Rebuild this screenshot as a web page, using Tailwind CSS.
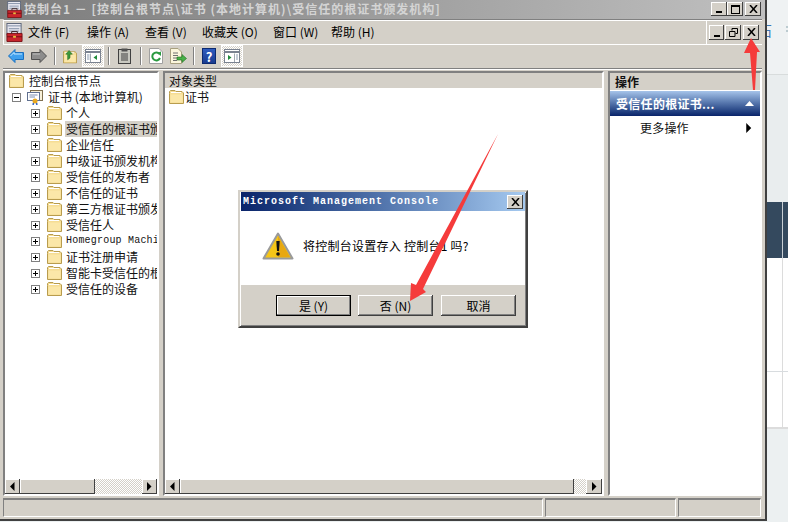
<!DOCTYPE html>
<html lang="zh">
<head>
    <meta charset="UTF-8">
    <title>控制台1</title>
    <script src="https://cdn.jsdelivr.net/npm/@tailwindcss/browser@4"></script>
</head>
<body class="relative w-[788px] h-[522px] overflow-hidden bg-[#ecf0f1] font-['Noto_Sans_CJK_SC','Liberation_Sans',sans-serif] text-[12px] leading-[16px] text-black">

    <!-- shared icons -->
    <svg class="hidden">
        <symbol id="folder" viewBox="0 0 15 14">
            <path d="M.5 3.500V1.500L1.500 .5H6L7 1.500H13L14.500 3V13.500H.5Z" fill="#f6dd94" stroke="#b89c4e"/>
            <path d="M2 2.500H12" stroke="#fff"/>
            <path d="M1.500 4.500H13.500V12.500H1.500Z" fill="#fbe7a8"/>
        </symbol>
        <symbol id="plus" viewBox="0 0 9 9">
            <rect x=".5" y=".5" width="8" height="8" fill="#fff" stroke="#808080"/>
            <path d="M2 4.500H7M4.500 2V7" stroke="#000"/>
        </symbol>
        <symbol id="left" viewBox="0 0 5 9"><path d="M4.500 0V9L0 4.500Z" fill="#000"/></symbol>
        <symbol id="right" viewBox="0 0 5 9"><path d="M0 0V9L4.500 4.500Z" fill="#000"/></symbol>
        <symbol id="appicon" viewBox="0 0 18 20">
            <rect x="1" y=".5" width="15" height="12" fill="#e8e8f0" stroke="#5a6478"/>
            <path d="M1.500 3H16M3 6H14M3 8.500H14" stroke="#7a88a0"/>
            <path d="M1 11H17V19.500H1Z" fill="#c8242c" stroke="#7a1015"/>
            <path d="M6 11V9H12V11" fill="none" stroke="#3a2020"/>
            <path d="M1 14.500H17" stroke="#701015"/>
            <rect x="7.500" y="13.500" width="3" height="2" fill="#e8c040"/>
        </symbol>
    </svg>

    <!-- main window -->
    <div class="relative z-10 w-[767px] h-[521px] bg-[#d4d0c8] border-r-2 border-b-2 border-r-[#404040] border-b-[#404040] flex flex-col">

        <!-- title bar -->
        <div class="h-[19px] shrink-0 flex items-center pr-[4px] pb-[1px] bg-gradient-to-r from-[#7c7c7c] to-[#c0c0c0] text-[#d4d4d4] font-bold">
            <svg class="w-[17px] h-[17px] ml-[6px] shrink-0"><use href="#appicon"/></svg>
            <span class="ml-px whitespace-nowrap overflow-hidden w-[425px] tracking-[1px]">控制台1 － [控制台根节点\证书 (本地计算机)\受信任的根证书颁发机构]</span>
            <div class="ml-auto flex">
                <div class="w-[16px] h-[14px] bg-[#d4d0c8] shadow-[inset_-1px_-1px_0_#404040,inset_1px_1px_0_#fff] flex items-end justify-center pb-[3px]"><div class="w-[6px] h-[2px] bg-black"></div></div>
                <div class="w-[16px] h-[14px] bg-[#d4d0c8] shadow-[inset_-1px_-1px_0_#404040,inset_1px_1px_0_#fff] flex items-center justify-center"><div class="w-[9px] h-[9px] border border-black border-t-2"></div></div>
                <div class="w-[16px] h-[14px] ml-[2px] bg-[#d4d0c8] shadow-[inset_-1px_-1px_0_#404040,inset_1px_1px_0_#fff] flex items-center justify-center">
                    <svg class="w-[9px] h-[8px]" viewBox="0 0 9 8"><path d="M1 0L8 8M8 0L1 8" stroke="#000" stroke-width="1.500"/></svg>
                </div>
            </div>
        </div>

        <!-- menu bar -->
        <div class="h-[25px] shrink-0 mx-[3px] flex items-center border-t border-t-[#808080] border-l border-l-white shadow-[inset_0_1px_0_#fff,0_1px_0_#fff]">
            <svg class="w-[17px] h-[19px] ml-[2px] shrink-0"><use href="#appicon"/></svg>
            <div class="flex ml-[5px] whitespace-nowrap">
                <span class="w-[59px]">文件 (F)</span><span class="w-[58px]">操作 (A)</span><span class="w-[57px]">查看 (V)</span><span class="w-[71px]">收藏夹 (O)</span><span class="w-[58px]">窗口 (W)</span><span>帮助 (H)</span>
            </div>
            <div class="ml-auto h-full w-[56px] border-l border-l-white flex items-center pl-[2px]">
                <div class="w-[15px] h-[15px] bg-[#d4d0c8] shadow-[inset_-1px_-1px_0_#404040,inset_1px_1px_0_#fff] flex items-end justify-center pb-[3px]"><div class="w-[6px] h-[2px] bg-black"></div></div>
                <div class="w-[16px] h-[15px] ml-[1px] bg-[#d4d0c8] shadow-[inset_-1px_-1px_0_#404040,inset_1px_1px_0_#fff] flex items-center justify-center">
                    <svg class="w-[9px] h-[9px]" viewBox="0 0 9 9"><path d="M3 2.500V.5H8.500V5.500H6.500M.5 3.500H6V8.500H.5Z" fill="none" stroke="#000"/></svg>
                </div>
                <div class="w-[16px] h-[15px] ml-[2px] bg-[#d4d0c8] shadow-[inset_-1px_-1px_0_#404040,inset_1px_1px_0_#fff] flex items-center justify-center">
                    <svg class="w-[9px] h-[8px]" viewBox="0 0 9 8"><path d="M1 0L8 8M8 0L1 8" stroke="#000" stroke-width="1.500"/></svg>
                </div>
            </div>
        </div>

        <!-- toolbar -->
        <div class="h-[25px] shrink-0 mx-[3px] flex items-center pl-[5px] border-b border-b-[#808080] shadow-[0_1px_0_#fff]">
            <svg class="w-[16px] h-[14px]" viewBox="0 0 16 14"><path d="M.5 7L7 .5V3.500H15.500V10.500H7V13.500Z" fill="#3fa0ee" stroke="#1a70c0" stroke-linejoin="round"/><path d="M2.500 7L6 3.500V5H14" fill="none" stroke="#c4e8ff"/></svg>
            <svg class="w-[16px] h-[14px] ml-[7px]" viewBox="0 0 16 14"><path d="M15.500 7L9 .5V3.500H.5V10.500H9V13.500Z" fill="#8c8c8c" stroke="#505050" stroke-linejoin="round"/><path d="M2 5H9" stroke="#bdbdbd"/></svg>
            <div class="w-px h-[18px] bg-[#808080] ml-[7px] shadow-[1px_0_0_#fff]"></div>
            <svg class="w-[14px] h-[15px] ml-[8px]" viewBox="0 0 15 15"><use href="#folder" width="15" height="14" y="1"/><path d="M5 11V5H3L6.500 1L10 5H7.500V9Z" fill="#3d9a3a" stroke="#1e6a20" stroke-width=".6"/></svg>
            <div class="w-[22px] h-[22px] ml-[5px] border border-white bg-[repeating-conic-gradient(#d4d0c8_0_25%,#fff_0_50%)] bg-[length:2px_2px] flex items-center justify-center">
                <svg class="w-[16px] h-[14px]" viewBox="0 0 16 14"><rect x=".5" y=".5" width="15" height="13" fill="#fff" stroke="#7a8290"/><path d="M1 3H15" stroke="#7a8290" stroke-width="2"/><path d="M5.500 4.500V13" stroke="#a0a8b0"/><path d="M2 6H4.500M2 8H4.500M2 10H4.500" stroke="#8a9ab0"/><path d="M12 6V11L8.500 8.500Z" fill="#1f8a3a"/></svg>
            </div>
            <div class="w-px h-[18px] bg-[#808080] ml-[4px] shadow-[1px_0_0_#fff]"></div>
            <svg class="w-[13px] h-[16px] ml-[9px]" viewBox="0 0 13 16"><rect x=".5" y="1.500" width="12" height="14" fill="#c8c8c0" stroke="#404040"/><rect x="3.500" y=".5" width="6" height="3" fill="#505050"/><path d="M3 6H10M3 8H10M3 10H10M3 12H10" stroke="#404040"/></svg>
            <div class="w-px h-[18px] bg-[#808080] ml-[9px] shadow-[1px_0_0_#fff]"></div>
            <svg class="w-[14px] h-[16px] ml-[8px]" viewBox="0 0 14 16"><path d="M.5 .5H10L13.500 4V15.500H.5Z" fill="#fff" stroke="#a0a0a0"/><path d="M10.500 6A4 4 0 1 0 11 10" fill="none" stroke="#2a9a40" stroke-width="2"/><path d="M8 5L12 3.500V8Z" fill="#2a9a40"/></svg>
            <svg class="w-[17px] h-[16px] ml-[7px]" viewBox="0 0 17 16"><path d="M.5 .5H8L11.500 4V15.500H.5Z" fill="#fbf6dc" stroke="#a8a080"/><path d="M3 5H8M3 7.500H8M3 10H7M3 12.500H7" stroke="#707070"/><path d="M7 9H12V6.500L16.500 10.500L12 14.500V12H7Z" fill="#48b048" stroke="#207020" stroke-width=".6"/></svg>
            <div class="w-px h-[18px] bg-[#808080] ml-[6px] shadow-[1px_0_0_#fff]"></div>
            <div class="w-[14px] h-[16px] ml-[8px] bg-gradient-to-b from-[#2f5cc0] to-[#1a3c90] border border-[#0c2a70] text-white text-[13px] leading-[15px] font-bold text-center">?</div>
            <div class="w-[22px] h-[22px] ml-[5px] border border-white bg-[repeating-conic-gradient(#d4d0c8_0_25%,#fff_0_50%)] bg-[length:2px_2px] flex items-center justify-center">
                <svg class="w-[16px] h-[14px]" viewBox="0 0 16 14"><rect x=".5" y=".5" width="15" height="13" fill="#fff" stroke="#7a8290"/><path d="M1 3H15" stroke="#7a8290" stroke-width="2"/><path d="M10.500 4.500V13" stroke="#a0a8b0"/><path d="M12 6H14M12 8H14M12 10H14" stroke="#8a9ab0"/><path d="M4 6V11L7.500 8.500Z" fill="#1f8a3a"/></svg>
            </div>
        </div>

        <!-- panes -->
        <div class="h-[425px] shrink-0 mt-[2px] ml-[3px] flex gap-[4px] text-[#111]">

            <!-- tree -->
            <div class="w-[156px] bg-white border-2 border-t-[#808080] border-l-[#808080] border-r-white border-b-white flex flex-col">
                <div class="flex-1 overflow-hidden whitespace-nowrap">
                    <div class="h-[16px] flex items-center pl-[4px]"><svg class="w-[15px] h-[14px] shrink-0"><use href="#folder"/></svg><span class="ml-[5px]">控制台根节点</span></div>
                    <div class="h-[16px] flex items-center pl-[7px]">
                        <svg class="w-[9px] h-[9px] shrink-0" viewBox="0 0 9 9"><rect x=".5" y=".5" width="8" height="8" fill="#fff" stroke="#808080"/><path d="M2 4.500H7" stroke="#000"/></svg>
                        <svg class="w-[16px] h-[15px] ml-[6px] shrink-0" viewBox="0 0 16 15"><rect x="3.500" y=".5" width="12" height="10" fill="#f8f0d8" stroke="#807050"/><rect x=".5" y="2.500" width="12" height="8" fill="#fff" stroke="#607090"/><path d="M2.500 5H10.500M2.500 7H8" stroke="#8090b0"/><circle cx="8" cy="11" r="2.500" fill="#e8a820"/><path d="M6.500 13L6 15M9.500 13L10 15" stroke="#3060c0" stroke-width="1.500"/></svg>
                        <span class="ml-[5px]">证书 (本地计算机)</span>
                    </div>
                    <div class="h-[16px] flex items-center pl-[26px]"><svg class="w-[9px] h-[9px] shrink-0"><use href="#plus"/></svg><svg class="w-[15px] h-[14px] ml-[7px] shrink-0"><use href="#folder"/></svg><span class="ml-[4px]">个人</span></div>
                    <div class="h-[16px] flex items-center pl-[26px]"><svg class="w-[9px] h-[9px] shrink-0"><use href="#plus"/></svg><svg class="w-[15px] h-[14px] ml-[7px] shrink-0"><use href="#folder"/></svg><span class="ml-[3px] pl-[1px] flex-1 bg-[#d4d0c8] overflow-hidden">受信任的根证书颁发机构</span></div>
                    <div class="h-[16px] flex items-center pl-[26px]"><svg class="w-[9px] h-[9px] shrink-0"><use href="#plus"/></svg><svg class="w-[15px] h-[14px] ml-[7px] shrink-0"><use href="#folder"/></svg><span class="ml-[4px]">企业信任</span></div>
                    <div class="h-[16px] flex items-center pl-[26px]"><svg class="w-[9px] h-[9px] shrink-0"><use href="#plus"/></svg><svg class="w-[15px] h-[14px] ml-[7px] shrink-0"><use href="#folder"/></svg><span class="ml-[4px]">中级证书颁发机构</span></div>
                    <div class="h-[16px] flex items-center pl-[26px]"><svg class="w-[9px] h-[9px] shrink-0"><use href="#plus"/></svg><svg class="w-[15px] h-[14px] ml-[7px] shrink-0"><use href="#folder"/></svg><span class="ml-[4px]">受信任的发布者</span></div>
                    <div class="h-[16px] flex items-center pl-[26px]"><svg class="w-[9px] h-[9px] shrink-0"><use href="#plus"/></svg><svg class="w-[15px] h-[14px] ml-[7px] shrink-0"><use href="#folder"/></svg><span class="ml-[4px]">不信任的证书</span></div>
                    <div class="h-[16px] flex items-center pl-[26px]"><svg class="w-[9px] h-[9px] shrink-0"><use href="#plus"/></svg><svg class="w-[15px] h-[14px] ml-[7px] shrink-0"><use href="#folder"/></svg><span class="ml-[4px]">第三方根证书颁发机构</span></div>
                    <div class="h-[16px] flex items-center pl-[26px]"><svg class="w-[9px] h-[9px] shrink-0"><use href="#plus"/></svg><svg class="w-[15px] h-[14px] ml-[7px] shrink-0"><use href="#folder"/></svg><span class="ml-[4px]">受信任人</span></div>
                    <div class="h-[16px] flex items-center pl-[26px]"><svg class="w-[9px] h-[9px] shrink-0"><use href="#plus"/></svg><svg class="w-[15px] h-[14px] ml-[7px] shrink-0"><use href="#folder"/></svg><span class="ml-[4px] font-['Liberation_Mono'] text-[10px] tracking-[0.2px]">Homegroup Machine Certificates</span></div>
                    <div class="h-[16px] flex items-center pl-[26px]"><svg class="w-[9px] h-[9px] shrink-0"><use href="#plus"/></svg><svg class="w-[15px] h-[14px] ml-[7px] shrink-0"><use href="#folder"/></svg><span class="ml-[4px]">证书注册申请</span></div>
                    <div class="h-[16px] flex items-center pl-[26px]"><svg class="w-[9px] h-[9px] shrink-0"><use href="#plus"/></svg><svg class="w-[15px] h-[14px] ml-[7px] shrink-0"><use href="#folder"/></svg><span class="ml-[4px]">智能卡受信任的根</span></div>
                    <div class="h-[16px] flex items-center pl-[26px]"><svg class="w-[9px] h-[9px] shrink-0"><use href="#plus"/></svg><svg class="w-[15px] h-[14px] ml-[7px] shrink-0"><use href="#folder"/></svg><span class="ml-[4px]">受信任的设备</span></div>
                </div>
                <div class="h-[15px] flex bg-[repeating-conic-gradient(#d4d0c8_0_25%,#fff_0_50%)] bg-[length:2px_2px]">
                    <div class="w-[15px] bg-[#d4d0c8] shadow-[inset_-1px_-1px_0_#404040,inset_1px_1px_0_#fff] flex items-center justify-center"><svg class="w-[5px] h-[9px]"><use href="#left"/></svg></div>
                    <div class="w-[75px] bg-[#d4d0c8] shadow-[inset_-1px_-1px_0_#404040,inset_1px_1px_0_#fff]"></div>
                    <div class="w-[15px] ml-auto bg-[#d4d0c8] shadow-[inset_-1px_-1px_0_#404040,inset_1px_1px_0_#fff] flex items-center justify-center"><svg class="w-[5px] h-[9px]"><use href="#right"/></svg></div>
                </div>
            </div>

            <!-- results list -->
            <div class="w-[441px] bg-white border-2 border-t-[#808080] border-l-[#808080] border-r-white border-b-white flex flex-col">
                <div class="h-[15px] bg-[#d4d0c8] pl-[4px] leading-[15px]">对象类型</div>
                <div class="flex-1 flex items-start pl-[4px] pt-[1px]"><svg class="w-[15px] h-[14px] mt-px"><use href="#folder"/></svg><span class="ml-px">证书</span></div>
                <div class="h-[15px] flex bg-[repeating-conic-gradient(#d4d0c8_0_25%,#fff_0_50%)] bg-[length:2px_2px]">
                    <div class="w-[15px] bg-[#d4d0c8] shadow-[inset_-1px_-1px_0_#404040,inset_1px_1px_0_#fff] flex items-center justify-center"><svg class="w-[5px] h-[9px]"><use href="#left"/></svg></div>
                    <div class="w-[394px] bg-[#d4d0c8] shadow-[inset_-1px_-1px_0_#404040,inset_1px_1px_0_#fff]"></div>
                    <div class="w-[16px] ml-auto bg-[#d4d0c8] shadow-[inset_-1px_-1px_0_#404040,inset_1px_1px_0_#fff] flex items-center justify-center"><svg class="w-[5px] h-[9px]"><use href="#right"/></svg></div>
                </div>
            </div>

            <!-- actions pane -->
            <div class="w-[154px] bg-white border-2 border-t-[#808080] border-l-[#808080] border-r-white border-b-white flex flex-col">
                <div class="h-[17px] bg-[#d4d0c8] pl-[5px] font-bold leading-[17px]">操作</div>
                <div class="h-[25px] mt-[1px] bg-gradient-to-b from-[#a6c4ea] to-[#0a246a] text-white font-bold pl-[6px] flex items-center tracking-[0.3px]">
                    受信任的根证书...
                    <svg class="w-[9px] h-[5px] ml-auto mr-[6px]" viewBox="0 0 9 5"><path d="M0 5L4.500 0L9 5Z" fill="#fff"/></svg>
                </div>
                <div class="h-[24px] flex items-center pl-[30px] tracking-[0.2px]">
                    更多操作
                    <svg class="w-[6px] h-[10px] ml-auto mr-[8px]" viewBox="0 0 5 9"><path d="M0 0V9L4.500 4.500Z" fill="#000"/></svg>
                </div>
            </div>
        </div>

        <!-- status bar -->
        <div class="h-[19px] shrink-0 mt-[2px] ml-[3px] mr-[4px] flex gap-[2px]">
            <div class="w-[540px] border border-t-2 border-t-[#808080] border-l-[#808080] border-r-white border-b-white"></div>
            <div class="w-[131px] border border-t-2 border-t-[#808080] border-l-[#808080] border-r-white border-b-white"></div>
            <div class="flex-1 border border-t-2 border-t-[#808080] border-l-[#808080] border-r-white border-b-white"></div>
        </div>
    </div>

    <!-- page behind the window -->
    <div class="absolute left-[766px] top-0 w-[22px] h-[522px] flex flex-col">
        <div class="h-[75px] border-b border-b-[#d8dcdc] bg-[#eff2f3] relative overflow-hidden">
            <span class="absolute left-[-8px] top-[21px] text-[#3b78b5] text-[14px] leading-[18px]">石</span>
            <span class="absolute right-0 top-[26px] w-[2px] h-[2px] bg-[#bccbd0]"></span>
            <span class="absolute right-0 top-[30px] w-[2px] h-[2px] bg-[#bccbd0]"></span>
        </div>
        <div class="h-[127px] bg-[#e9edee]"></div>
        <div class="h-[56px] bg-[#34495e] flex"><div class="w-[16px]"></div><div class="w-px bg-[#c8ced4]"></div></div>
        <div class="h-[114px] bg-white flex border-b border-b-[#d8dcdf]"><div class="w-[16px]"></div><div class="w-px bg-[#dcdcdc]"></div></div>
        <div class="h-[57px] bg-white flex border-b-2 border-b-[#dcdcdc]"><div class="w-[16px]"></div><div class="w-px bg-[#dcdcdc]"></div></div>
        <div class="flex-1 bg-[#ecf0f1]"></div>
    </div>

    <!-- dialog -->
    <div class="absolute z-20 left-[238px] top-[190px] w-[290px] h-[138px] bg-[#d4d0c8] border-2 border-t-[#d4d0c8] border-l-[#d4d0c8] border-r-[#404040] border-b-[#404040] shadow-[inset_1px_1px_0_#fff,inset_-1px_-1px_0_#808080] px-[1px] flex flex-col">
        <div class="h-[19px] shrink-0 bg-gradient-to-r from-[#0a246a] to-[#a6caf0] flex items-center pl-[2px] pr-[2px] text-white font-bold font-['Liberation_Mono'] text-[10px] tracking-[1px]">
            <span class="whitespace-nowrap pt-[1px]">Microsoft Management Console</span>
            <div class="ml-auto w-[16px] h-[14px] bg-[#d4d0c8] shadow-[inset_-1px_-1px_0_#404040,inset_1px_1px_0_#fff] flex items-center justify-center">
                <svg class="w-[9px] h-[8px]" viewBox="0 0 9 8"><path d="M1 0L8 8M8 0L1 8" stroke="#000" stroke-width="1.500"/></svg>
            </div>
        </div>
        <div class="h-[74px] shrink-0 bg-white flex items-center pl-[21px] pb-[5px]">
            <svg class="w-[32px] h-[28px] shrink-0" viewBox="0 0 32 28"><path d="M16 1.500L30.500 26.500H1.500Z" fill="#f5c518" stroke="#9a9a9a" stroke-width="2" stroke-linejoin="round"/><path d="M16 4L28 25H16Z" fill="#e8a810"/><path d="M14.300 9H17.700L17 19H15Z" fill="#111"/><circle cx="16" cy="22" r="1.800" fill="#111"/></svg>
            <span class="ml-[9px] tracking-[0.25px]">将控制台设置存入 控制台1 吗?</span>
        </div>
        <div class="flex-1 flex items-start pl-[35px] pt-[10px]">
            <button class="w-[75px] h-[21px] bg-[#d4d0c8] border border-black shadow-[inset_-1px_-1px_0_#808080,inset_1px_1px_0_#fff]">是 (Y)</button>
            <button class="w-[75px] h-[21px] ml-[7px] bg-[#d4d0c8] shadow-[inset_-1px_-1px_0_#404040,inset_1px_1px_0_#fff,inset_-2px_-2px_0_#808080]">否 (N)</button>
            <button class="w-[75px] h-[21px] ml-[8px] bg-[#d4d0c8] shadow-[inset_-1px_-1px_0_#404040,inset_1px_1px_0_#fff,inset_-2px_-2px_0_#808080]">取消</button>
        </div>
    </div>

    <!-- red annotation arrows -->
    <svg class="absolute z-30 left-0 top-0 pointer-events-none" width="788" height="522" viewBox="0 0 788 522">
        <path d="M498 134L423 289L426 292L410 301L411 283L416 285Z" fill="#f53b3b"/>
        <path d="M751 38L760 52L757 52L755 90H753L750 53L744 53Z" fill="#f53b3b"/>
    </svg>
</body>
</html>
